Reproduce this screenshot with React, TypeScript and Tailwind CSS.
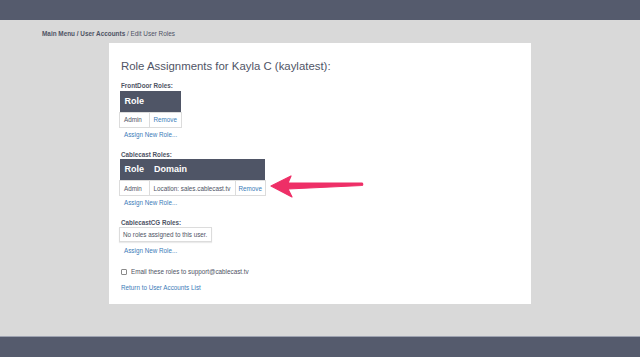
import React from 'react';

const font = { fontFamily: '"Liberation Sans", Arial, sans-serif' };

function Assign() {
  return <div className="text-[6.3px] text-[#3b7bb8] ml-[4px] leading-none whitespace-nowrap">Assign New Role...</div>;
}

export default function App() {
  return (
    <div className="w-[640px] h-[357px] flex flex-col bg-[#d9d9d9] relative overflow-hidden" style={font}>
      <div className="h-[20px] bg-[#555b6d]" />
      <div className="flex-1">
        <div className="pt-[10px] pl-[42px] text-[6.4px] leading-[8px] text-[#4e5364]">
          <span className="font-bold">Main Menu / User Accounts</span> / Edit User Roles
        </div>
        <div className="ml-[109px] mt-[5px] w-[422px] h-[261px] bg-white pl-[11px] pt-[18px] text-[#4e5364]">
          <h1 className="text-[11.4px] leading-none ml-[1px] text-[#4f5466]">Role Assignments for Kayla C (kaylatest):</h1>

          <div className="mt-[11px] text-[6.3px] font-bold leading-none ml-[1px]">FrontDoor Roles:</div>
          <table className="mt-[1px] border-collapse text-[6.3px] ml-[-1px] whitespace-nowrap">
            <thead>
              <tr className="bg-[#4f5566] text-white h-[22px]">
                <th className="text-left px-[5px] w-[26px] text-[9px] font-bold">Role</th>
                <th className="w-[32px]" />
              </tr>
            </thead>
            <tbody>
              <tr className="h-[15px]">
                <td className="border border-[#dcdcdc] px-[4px]">Admin</td>
                <td className="border border-[#dcdcdc] px-[4px] text-[#3b7bb8]">Remove</td>
              </tr>
            </tbody>
          </table>
          <div className="mt-[4px]"><Assign /></div>

          <div className="mt-[13px] text-[6.3px] font-bold leading-none ml-[1px]">Cablecast Roles:</div>
          <table className="mt-[1px] border-collapse text-[6.3px] ml-[-1px] whitespace-nowrap">
            <thead>
              <tr className="bg-[#4f5566] text-white h-[22px]">
                <th className="text-left px-[5px] w-[27px] text-[9px] font-bold">Role</th>
                <th className="text-left px-[5px] w-[83px] text-[9px] font-bold">Domain</th>
                <th className="w-[30px]" />
              </tr>
            </thead>
            <tbody>
              <tr className="h-[15px]">
                <td className="border border-[#dcdcdc] px-[4px]">Admin</td>
                <td className="border border-[#dcdcdc] px-[4px]">Location: sales.cablecast.tv</td>
                <td className="border border-[#dcdcdc] px-[3px] text-[#3b7bb8]">Remove</td>
              </tr>
            </tbody>
          </table>
          <div className="mt-[4px]"><Assign /></div>

          <div className="mt-[13px] text-[6.3px] font-bold leading-none ml-[1px]">CablecastCG Roles:</div>
          <div className="mt-[1px] ml-[-1px] w-[93px] h-[15px] border border-[#dcdcdc] flex items-center px-[3px] text-[6.3px] whitespace-nowrap shadow-[0_1px_1px_rgba(0,0,0,0.08)]">
            No roles assigned to this user.
          </div>
          <div className="mt-[6px]"><Assign /></div>

          <div className="mt-[15px] flex items-center gap-[4px] text-[6.3px] leading-none ml-[1px]">
            <span className="w-[6px] h-[6px] border border-[#8a8a8a] rounded-[1px]" />
            <span>Email these roles to support@cablecast.tv</span>
          </div>
          <div className="mt-[10px] text-[6.3px] leading-none text-[#3b7bb8] ml-[1px]">Return to User Accounts List</div>
        </div>
      </div>
      <div className="h-[21px] bg-[#555b6d] border-t border-[#9ea3b1]" />

      <svg className="absolute left-[268px] top-[172px]" width="98" height="28" viewBox="0 0 98 28">
        <path d="M3 14 L23 4 L20 11 L94 11 Q95.5 12 94 13.5 L20 17 L24 25 Z" fill="#ee2f67" strokeLinejoin="round" stroke="#ee2f67" strokeWidth="1.2" />
      </svg>
    </div>
  );
}
